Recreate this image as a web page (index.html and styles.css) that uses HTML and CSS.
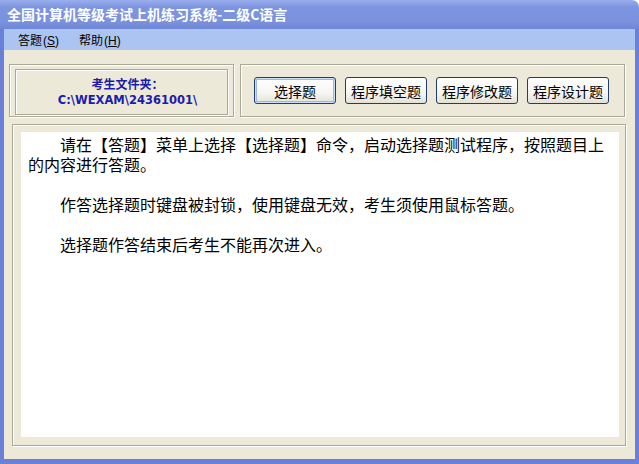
FILE: index.html
```html
<!DOCTYPE html>
<html lang="zh-CN">
<head>
  <meta charset="UTF-8">
  <title>全国计算机等级考试上机练习系统-二级C语言</title>
  <link rel="stylesheet" href="styles.css">
</head>
<body>

<div class="window">
  <div class="titlebar">全国计算机等级考试上机练习系统-二级C语言</div>

  <div class="client">
    <!-- menu -->
    <div class="menubar">
      <span class="menu-item">答题<span class="key">(<u>S</u>)</span></span>
      <span class="menu-item">帮助<span class="key">(<u>H</u>)</span></span>
    </div>

    <div class="toprow">
      <div class="frame folder-frame">
        <div class="folder-panel">
          <div class="folder-title">考生文件夹：</div>
          <div class="folder-path">C:\WEXAM\24361001\</div>
        </div>
      </div>

      <div class="frame button-frame">
        <button class="btn btn-default">选择题</button>
        <button class="btn">程序填空题</button>
        <button class="btn">程序修改题</button>
        <button class="btn">程序设计题</button>
      </div>
    </div>

    <div class="frame content-frame">
      <div class="notice">
        <p>请在【答题】菜单上选择【选择题】命令，启动选择题测试程序，按照题目上的内容进行答题。</p>
        <p>作答选择题时键盘被封锁，使用键盘无效，考生须使用鼠标答题。</p>
        <p>选择题作答结束后考生不能再次进入。</p>
      </div>
    </div>
  </div>
</div>

</body>
</html>
```

FILE: styles.css
```css
body {
  margin: 0;
  padding: 0;
  background: #ffffff;
  font-family: "Noto Sans CJK SC", "Liberation Sans", sans-serif;
}

.window {
  width: 639px;
  height: 464px;
  display: flex;
  flex-direction: column;
}

/* barra de titulo */
.titlebar {
  height: 29px;
  line-height: 29px;
  padding-left: 7px;
  color: #ffffff;
  font-size: 14px;
  font-weight: bold;
  background: linear-gradient(#9aaeec, #7d95e0 25%, #7a91dc 75%, #7087d7);
  border-top-right-radius: 7px;
  white-space: nowrap;
}

.client {
  flex: 1;
  display: flex;
  flex-direction: column;
  background-color: #ece9d8;
  border-left: 4px solid #6b80d9;
  border-right: 4px solid #6b80d9;
  border-bottom: 5px solid #6b80d9;
}

.menubar {
  height: 21px;
  display: flex;
  align-items: center;
  gap: 20px;
  padding-left: 14px;
  background-color: #abc4f2;
  font-size: 12px;
  color: #000;
}

.menu-item .key {
  font-family: "Liberation Sans", sans-serif;
  margin-left: 1px;
}

/* marcos con borde grabado */
.frame {
  border: 1px solid #aca899;
  box-shadow: inset 1px 1px 0 #ffffff, 1px 1px 0 #ffffff;
  box-sizing: border-box;
}

.toprow {
  display: flex;
  gap: 6px;
  margin: 14px 0 0 5px;
}

.folder-frame {
  width: 225px;
  height: 53px;
  padding: 4px 5px 1px 5px;
}

.folder-panel {
  height: 100%;
  box-sizing: border-box;
  padding-left: 12px;
  border: 1px solid #aca899;
  box-shadow: inset 1px 1px 0 #ffffff, 1px 1px 0 #ffffff;
  display: flex;
  flex-direction: column;
  align-items: center;
  justify-content: center;
  color: #1c1caa;
  font-weight: bold;
  font-size: 12px;
  line-height: 16px;
}

.folder-path {
  font-family: "DejaVu Sans", sans-serif;
  font-size: 11.5px;
}

.button-frame {
  width: 385px;
  height: 53px;
  display: flex;
  align-items: flex-start;
  gap: 9px;
  padding: 12px 0 0 13px;
}

.btn {
  width: 82px;
  height: 27px;
  padding: 0;
  border: 1px solid #1f3c74;
  border-radius: 3px;
  background: linear-gradient(#ffffff, #f6f5f0 60%, #e3e1d6);
  font-family: "Noto Sans CJK SC", sans-serif;
  font-size: 14px;
  color: #000;
}

.btn-default {
  box-shadow: inset 0 0 0 1px #cde0fb, inset 0 0 0 2px #9ab8ec;
}

.content-frame {
  margin: 7px 9px 0 8px;
  height: 322px;
  padding: 7px 6px 8px 8px;
}

.notice {
  height: 100%;
  box-sizing: border-box;
  background: #ffffff;
  padding: 2px 7px 0 7px;
  font-size: 16px;
  line-height: 20px;
  color: #000;
}

.notice p {
  margin: 0 0 20px 0;
  text-indent: 2em;
}
```
